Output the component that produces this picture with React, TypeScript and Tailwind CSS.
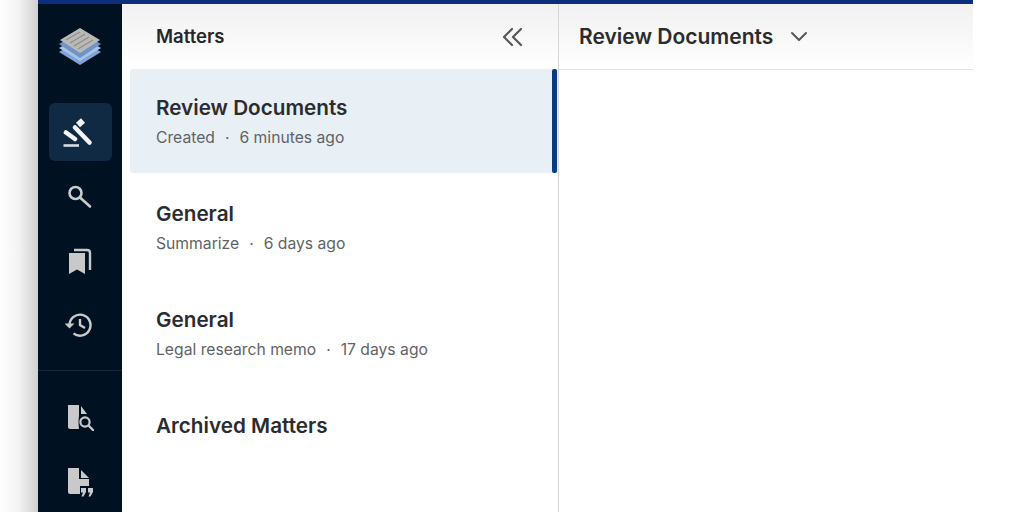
const font = { fontFamily: '"Inter", "Noto Sans", sans-serif' };

function Logo() {
  return (
    <svg width="44" height="40" viewBox="0 0 44 40">
      <path d="M22 13 L43 25 L22 38 L1 25 Z" fill="#7fa3d4" />
      <path d="M22 9 L43 21 L22 34 L1 21 Z" fill="#a9c2e6" />
      <path d="M22 5 L43 17 L22 31 L1 17 Z" fill="#6f93c9" />
      <path d="M22 1 L42 13 L22 26 L2 13 Z" fill="#b9b9b6" />
      <path d="M8 13 L22 5 M12 16 L27 7 M16 19 L31 10 M20 22 L35 13" stroke="#8e8e8c" strokeWidth="1.4" />
    </svg>
  );
}

function Gavel() {
  return (
    <svg width="34" height="32" viewBox="-1 0 34 32" fill="none" stroke="#f2f4f6" strokeLinecap="round">
      <path d="M2 16.5 L11 23" strokeWidth="4.6" />
      <path d="M11 11.5 L25.5 26.5" strokeWidth="4.6" />
      <path d="M14 9 L19 4.5" strokeWidth="6" strokeLinecap="butt" />
      <path d="M-0.5 29.5 H15" stroke="#d8dde3" strokeWidth="2.6" strokeLinecap="butt" />
    </svg>
  );
}

function Search() {
  return (
    <svg width="26" height="26" viewBox="0 0 26 26" fill="none" stroke="#c9cbcd" strokeWidth="2.6">
      <circle cx="8.5" cy="10" r="6" />
      <path d="M13 14.5 L23 23.5" strokeLinecap="round" />
    </svg>
  );
}

function Bookmarks() {
  return (
    <svg width="26" height="28" viewBox="0 0 26 28">
      <path d="M2 6 H18 V27 L10 22.5 L2 27 Z" fill="#c9c9c9" />
      <path d="M7 3 H20 Q23 3 23 6 V23" fill="none" stroke="#c9c9c9" strokeWidth="2.4" />
    </svg>
  );
}

function History() {
  return (
    <svg width="30" height="28" viewBox="0 0 30 28" fill="none" stroke="#c9cbcd" strokeWidth="2.4">
      <path d="M4.5 14 A10.5 10.5 0 1 1 8.5 22.4" />
      <path d="M-0.5 12.5 L4.5 17.5 L9.5 12.5 Z" fill="#c9cbcd" stroke="none" />
      <path d="M15 8 V14 L20 17" />
    </svg>
  );
}

function DocSearch() {
  return (
    <svg width="28" height="30" viewBox="0 0 28 30">
      <path d="M2 4 H13 V14 Q12 20 13 28 H4 Q2 28 2 26 Z" fill="#c9c9c9" />
      <path d="M15 5 L21 13 H15 Z" fill="#c9c9c9" />
      <circle cx="19" cy="21" r="4.6" fill="none" stroke="#c9c9c9" strokeWidth="2.2" />
      <path d="M22.5 24.5 L27 29" stroke="#c9c9c9" strokeWidth="2.4" strokeLinecap="round" />
    </svg>
  );
}

function DocQuote() {
  return (
    <svg width="30" height="32" viewBox="0 0 30 32">
      <path d="M3 3 H14 V14 H24 V21 H15 V29 H5 Q3 29 3 27 Z" fill="#c9c9c9" />
      <path d="M16 5 L24 13 H16 Z" fill="#c9c9c9" />
      <path d="M16 23 H21 V27 L18.5 31.5 H16.5 L18 27.5 H16 Z M23 23 H28 V27 L25.5 31.5 H23.5 L25 27.5 H23 Z" fill="#c9c9c9" />
    </svg>
  );
}

function Row({ title, left, right, active }: { title: string; left?: string; right?: string; active?: boolean }) {
  return (
    <div className={`flex flex-col pl-[26px] pt-[25px] ml-2 relative ${active ? "h-[104px] mb-[2px] bg-[#e8eff5] rounded-l-[3px]" : "h-[106px]"}`}>
      <div className="text-[20.7px] leading-[28px] font-semibold text-[#2b2c2f]">{title}</div>
      {left && (
        <div className="text-[15.7px] leading-[20px] mt-[6px] text-[#5f6368] flex gap-[10px]">
          <span>{left}</span>
          <span>·</span>
          <span>{right}</span>
        </div>
      )}
      {active && <div className="absolute right-px top-0 bottom-0 w-[5px] rounded-[2px] bg-[#0a3a86]" />}
    </div>
  );
}

export default function App() {
  return (
    <div style={font} className="w-[1024px] h-[512px] bg-white flex overflow-hidden">
      <div className="w-[38px] h-full bg-gradient-to-r from-white via-[#f3f3f3] to-[#cfcfcf]" />
      <div className="w-[935px] h-full flex flex-col">
        <div className="h-[4px] bg-[#0b2f7d] shrink-0" />
        <div className="flex-1 flex min-h-0">
          <div className="w-[84px] bg-[#001122] flex flex-col items-center shrink-0 pt-[23px]">
            <Logo />
            <div className="mt-[36px] w-[63px] h-[58px] rounded-[6px] bg-[#0f2a42] flex items-center justify-center">
              <Gavel />
            </div>
            <div className="mt-[22px] h-[26px] flex items-center"><Search /></div>
            <div className="mt-[38px] h-[28px] flex items-center"><Bookmarks /></div>
            <div className="mt-[36px] h-[28px] flex items-center"><History /></div>
            <div className="mt-[31px] w-full h-px bg-[#13263a]" />
            <div className="mt-[30px] h-[30px] flex items-center"><DocSearch /></div>
            <div className="mt-[34px] h-[32px] flex items-center"><DocQuote /></div>
          </div>
          <div className="w-[437px] shrink-0 border-r border-[#d4d6d8] flex flex-col">
            <div className="h-[65px] shrink-0 bg-gradient-to-b from-[#f1f1f2] to-white flex items-center justify-between pl-[34px] pr-[35px]">
              <span className="text-[18.5px] font-semibold text-[#26272a]">Matters</span>
              <svg width="22" height="20" viewBox="0 0 22 20" fill="none" stroke="#55585c" strokeWidth="2.2" strokeLinecap="round" strokeLinejoin="round">
                <path d="M11 2 L3 10 L11 18" />
                <path d="M20 2 L12 10 L20 18" />
              </svg>
            </div>
            <Row title="Review Documents" left="Created" right="6 minutes ago" active />
            <Row title="General" left="Summarize" right="6 days ago" />
            <Row title="General" left="Legal research memo" right="17 days ago" />
            <Row title="Archived Matters" />
          </div>
          <div className="flex-1 flex flex-col min-w-0">
            <div className="h-[66px] shrink-0 bg-gradient-to-b from-[#f1f1f2] to-white border-b border-[#e2e3e4] flex items-center pl-[20px] gap-[17px]">
              <span className="text-[21px] font-semibold text-[#2b2c2f]">Review Documents</span>
              <svg width="18" height="12" viewBox="0 0 18 12" fill="none" stroke="#55585c" strokeWidth="2" strokeLinecap="round" strokeLinejoin="round">
                <path d="M2 2 L9 9 L16 2" />
              </svg>
            </div>
          </div>
        </div>
      </div>
    </div>
  );
}
